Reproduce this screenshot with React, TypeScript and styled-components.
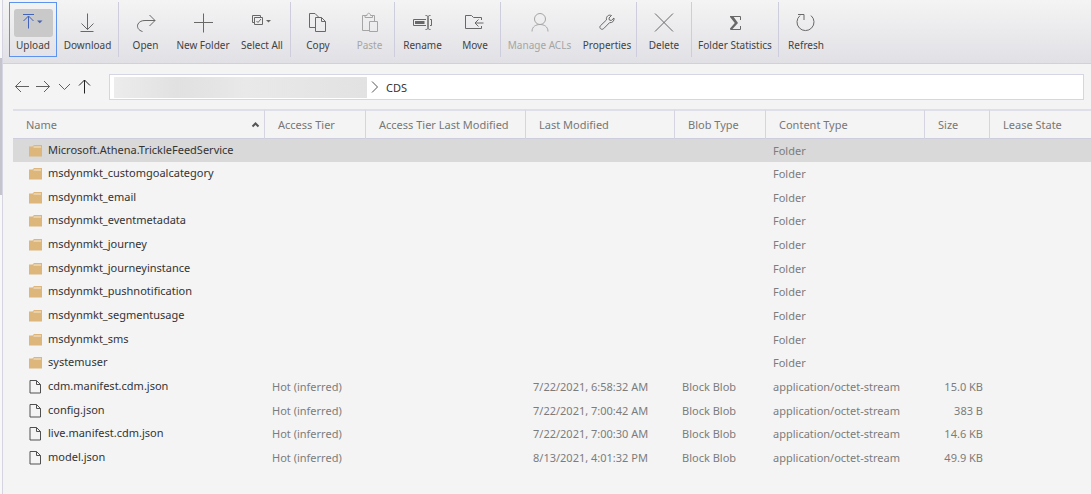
import React from "react";
import styled, { createGlobalStyle } from "styled-components";

const GlobalStyle = createGlobalStyle`
  * { box-sizing: border-box; }
  html, body { margin: 0; min-height: 100%; background: #f4f4f4; }
  body, button, input, table {
    font-family: "Noto Sans", "Open Sans", sans-serif;
    font-size: 11px;
  }
`;

const Page = styled.div`
  display: flex;
  min-height: 100vh;
`;

const SideEdge = styled.div`
  flex: none;
  width: 3px;
  background: #f8f8f8;
  border-right: 1px solid #d5d5e2;
  padding-top: 58px;
`;

const SideThumb = styled.div`
  height: 137px;
  background: #c4c4cc;
`;

const Main = styled.main`
  flex: 1;
  min-width: 0;
`;

const Toolbar = styled.div`
  display: flex;
  height: 64px;
  padding: 2px 0 6px 6px;
  background: linear-gradient(#f4f4f4, #e1e0e5);
  border-bottom: 1px solid #d0d0de;
`;

const Group = styled.div`
  display: flex;
  & + & { border-left: 1px solid #cdcddd; }
`;

const ToolButton = styled.button<{ $width: number }>`
  display: flex;
  flex-direction: column;
  align-items: center;
  width: ${(p) => p.$width}px;
  padding: 6px 0 0;
  border: 1px solid transparent;
  background: none;
  color: #424242;
  font-size: 10px;
  line-height: 16px;
  white-space: nowrap;
  &:disabled { color: #a5a5a5; }
  &[aria-pressed="true"] { border-color: #5b93ee; }
`;

const IconBox = styled.span<{ $active?: boolean; $disabled?: boolean }>`
  display: flex;
  align-items: center;
  justify-content: center;
  width: 39px;
  height: 28px;
  border-radius: 3px;
  background: ${(p) => (p.$active ? "#c9c9c9" : "none")};
  color: ${(p) => (p.$active ? "#4263b8" : p.$disabled ? "#a5a5a5" : "#686868")};
`;

const AddressBar = styled.div`
  display: flex;
  align-items: center;
  gap: 14px;
  padding: 10px 7px 9px 8px;
`;

const NavButtons = styled.nav`
  display: flex;
  padding-bottom: 2px;
`;

const NavButton = styled.button`
  display: flex;
  justify-content: center;
  width: 21px;
  padding: 0;
  border: 0;
  background: none;
  color: #606060;
  &:last-child { color: #222; }
`;

const PathBox = styled.div`
  flex: 1;
  display: flex;
  align-items: center;
  height: 26px;
  padding-left: 4px;
  background: #fff;
  border: 1px solid #d5d5e5;
`;

const HiddenCrumb = styled.span`
  width: 253px;
  height: 21px;
  margin-right: 4px;
  background: linear-gradient(90deg, #ececec, #e1e1e1 25%, #e4e4e4 38%, #e9e9e9 52%, #e2e2e2);
`;

const PathInput = styled.input`
  flex: 1;
  min-width: 0;
  margin-left: 7px;
  padding: 0;
  border: 0;
  outline: 0;
  background: none;
  color: #333;
`;

const TableArea = styled.div`
  padding-left: 10px;
`;

const Table = styled.table`
  width: 100%;
  table-layout: fixed;
  border-collapse: separate;
  border-spacing: 0;
  line-height: 16px;
`;

const HeadCell = styled.th<{ $width?: number }>`
  width: ${(p) => (p.$width ? `${p.$width}px` : "auto")};
  height: 30px;
  padding: 0 0 0 13px;
  border-top: 2px solid #dfdfe9;
  border-bottom: 1px solid #cdcddd;
  border-right: 1px solid #d5d5e2;
  color: #777;
  font-weight: 400;
  text-align: left;
  white-space: nowrap;
  &:last-child { border-right: 0; }
`;

const HeadLabel = styled.span`
  display: flex;
  align-items: center;
  justify-content: space-between;
  padding-right: 4px;
`;

const Row = styled.tr<{ $selected?: boolean }>`
  height: 24px;
  background: ${(p) => (p.$selected ? "#d9d9d9" : "none")};
  &:first-child, &:nth-child(3n) { height: 23px; }
`;

const Cell = styled.td<{ $right?: boolean }>`
  padding: 0 7px;
  color: #7c7c7c;
  text-align: ${(p) => (p.$right ? "right" : "left")};
  white-space: nowrap;
`;

const NameCell = styled(Cell)`
  padding: 0 0 2px 15px;
  color: #333;
`;

const NameContent = styled.span`
  display: flex;
  align-items: center;
  gap: 6px;
`;

type SvgProps = { w?: number; h?: number; sw?: number; children: React.ReactNode };
const Svg = ({ w = 24, h = 24, sw = 1, children }: SvgProps) => (
  <svg width={w} height={h} viewBox={`0 0 ${w} ${h}`} fill="none" stroke="currentColor" strokeWidth={sw} aria-hidden="true">
    {children}
  </svg>
);

const icons = {
  upload: (
    <Svg>
      <path d="M2 3.500h11M7.500 17.500V5M2.500 10l5-5 5 5" />
      <path d="M16 9.500h5.500l-2.750 2.800z" fill="currentColor" stroke="none" />
    </Svg>
  ),
  download: <Svg><path d="M11.500 2.500v16M5.500 12.500l6 6 6-6M4.500 20.500h13" /></Svg>,
  open: <Svg><path d="M8.500 20.500C4.500 19.500 2.500 16 4 13 5.300 10.500 8 9.500 11 9.500h10M15.500 4l5.500 5.500-5.500 5.500" /></Svg>,
  add: <Svg><path d="M12.500 2.500v19M3 11.500h19" /></Svg>,
  selectAll: (
    <Svg>
      <path d="M4.500 11.500h-2v-7h8v2M4.500 6.500h8v7h-8z" />
      <path d="M6.500 10l1.500 1.500 3-3.500" />
      <path d="M16 9h5l-2.500 2.500z" fill="currentColor" stroke="none" />
    </Svg>
  ),
  copy: <Svg><path d="M9 16.500H3.500v-14h5.500l3.500 3.500M9.500 6.500h6l4 4v10h-10zM15.500 6.500v4h4" /></Svg>,
  paste: <Svg><path d="M11 19.500H4.500v-15H7M14 4.500h2.500V10M7 6.500v-2h2c0-3 3.500-3 3.500 0h2v2zM11.500 10.500h8v10h-8z" /></Svg>,
  rename: (
    <Svg>
      <path d="M15 8.500H2.500v6H15M19 8.500h1.500v6H19M14.500 4.500c2 0 2.500.5 2.500 2v10c0 1.500-.5 2-2.500 2M19.500 4.500c-2 0-2.500.5-2.500 2v10c0 1.500.5 2 2.500 2" />
      <path d="M4 10h9.500v3H4z" fill="currentColor" stroke="none" />
    </Svg>
  ),
  move: <Svg><path d="M18.500 9V6.500h-8l-2-2h-6v13h16V15M20.500 12h-8.500M15.500 8.500L12 12l3.500 3.500" /></Svg>,
  person: <Svg><circle cx="12" cy="8" r="5.500" /><path d="M4 20.500c0-5 4-7 8-7s8 2 8 7" /></Svg>,
  wrench: <Svg><path d="M16.500 4.500l-2.500 2.500.3 2 2 .5 2.700-2.500c.5 2.800-1.500 5-4.500 4.700l-5.800 5.900c-2 1.900-5-.5-3.400-2.700l6.200-6c-.7-3 1.700-5.700 5-4.400z" /></Svg>,
  cross: <Svg><path d="M3 2.500l18 18M21 2.500l-18 18" /></Svg>,
  sigma: <Svg><path d="M17.500 9V5.500H7.500M7.500 18.500h10V15" /><path d="M7 5h3l5 7-6 6.500H7v-1l4.800-5.500L7 6z" fill="currentColor" stroke="none" /></Svg>,
  refresh: <Svg><path d="M6 4.600A8.500 8.500 0 1 0 17 4.600M4 3.500h6V9" /></Svg>,
};

type Tool = { label: string; icon: keyof typeof icons; width: number; active?: boolean; disabled?: boolean };

const toolGroups: Tool[][] = [
  [
    { label: "Upload", icon: "upload", width: 48, active: true },
    { label: "Download", icon: "download", width: 61 },
  ],
  [
    { label: "Open", icon: "open", width: 53 },
    { label: "New Folder", icon: "add", width: 62 },
    { label: "Select All", icon: "selectAll", width: 56 },
  ],
  [
    { label: "Copy", icon: "copy", width: 54 },
    { label: "Paste", icon: "paste", width: 49, disabled: true },
  ],
  [
    { label: "Rename", icon: "rename", width: 55 },
    { label: "Move", icon: "move", width: 50 },
  ],
  [
    { label: "Manage ACLs", icon: "person", width: 77, disabled: true },
    { label: "Properties", icon: "wrench", width: 58 },
  ],
  [{ label: "Delete", icon: "cross", width: 54 }],
  [{ label: "Folder Statistics", icon: "sigma", width: 86 }],
  [{ label: "Refresh", icon: "refresh", width: 54 }],
];

const columns = [
  { label: "Name", width: 252, sorted: true },
  { label: "Access Tier", width: 101 },
  { label: "Access Tier Last Modified", width: 160 },
  { label: "Last Modified", width: 149 },
  { label: "Blob Type", width: 91 },
  { label: "Content Type", width: 159 },
  { label: "Size", width: 65 },
  { label: "Lease State" },
];

const folders = [
  "Microsoft.Athena.TrickleFeedService",
  "msdynmkt_customgoalcategory",
  "msdynmkt_email",
  "msdynmkt_eventmetadata",
  "msdynmkt_journey",
  "msdynmkt_journeyinstance",
  "msdynmkt_pushnotification",
  "msdynmkt_segmentusage",
  "msdynmkt_sms",
  "systemuser",
];

const files = [
  { name: "cdm.manifest.cdm.json", modified: "7/22/2021, 6:58:32 AM", size: "15.0 KB" },
  { name: "config.json", modified: "7/22/2021, 7:00:42 AM", size: "383 B" },
  { name: "live.manifest.cdm.json", modified: "7/22/2021, 7:00:30 AM", size: "14.6 KB" },
  { name: "model.json", modified: "8/13/2021, 4:01:32 PM", size: "49.9 KB" },
];

const FolderIcon = () => (
  <svg width="14" height="14" viewBox="0 0 14 14" aria-hidden="true">
    <path d="M1 3.500h3.500L6 2h8v11.500H1z" fill="#dcb67a" />
    <path d="M5.500 4h7.500" stroke="#f6ead6" />
  </svg>
);

const FileIcon = () => (
  <Svg w={14} h={16}><path d="M2 2.500h6.500l4 4v8.500H2zM8.500 2.500v4h4" stroke="#505050" /></Svg>
);

export default function App() {
  return (
    <>
      <GlobalStyle />
      <Page>
        <SideEdge><SideThumb /></SideEdge>
        <Main>
          <Toolbar role="toolbar">
            {toolGroups.map((group) => (
              <Group key={group[0].label}>
                {group.map((t) => (
                  <ToolButton key={t.label} type="button" $width={t.width} disabled={t.disabled} aria-pressed={t.active}>
                    <IconBox $active={t.active} $disabled={t.disabled}>{icons[t.icon]}</IconBox>
                    {t.label}
                  </ToolButton>
                ))}
              </Group>
            ))}
          </Toolbar>
          <AddressBar>
            <NavButtons aria-label="History">
              <NavButton type="button" aria-label="Back"><Svg w={16} h={16}><path d="M15 8.500H1.500M7 3L1.500 8.500 7 14" /></Svg></NavButton>
              <NavButton type="button" aria-label="Forward"><Svg w={16} h={16}><path d="M1 8.500h13.500M9 3l5.500 5.500L9 14" /></Svg></NavButton>
              <NavButton type="button" aria-label="Recent"><Svg w={16} h={16}><path d="M3 6l5.500 5.500L14 6" /></Svg></NavButton>
              <NavButton type="button" aria-label="Up"><Svg w={16} h={16}><path d="M7.500 15.500V2M2 7.500L7.500 2 13 7.500" /></Svg></NavButton>
            </NavButtons>
            <PathBox>
              <HiddenCrumb />
              <Svg w={8} h={14}><path d="M1 1.500l5.500 5.500L1 12.500" stroke="#555" /></Svg>
              <PathInput aria-label="Path" defaultValue="CDS" />
            </PathBox>
          </AddressBar>
          <TableArea>
            <Table>
              <thead>
                <tr>
                  {columns.map((c) => (
                    <HeadCell key={c.label} $width={c.width} scope="col">
                      <HeadLabel>
                        {c.label}
                        {c.sorted && <Svg w={9} h={6} sw={2}><path d="M1.500 4.500l3-3 3 3" stroke="#555" /></Svg>}
                      </HeadLabel>
                    </HeadCell>
                  ))}
                </tr>
              </thead>
              <tbody>
                {folders.map((name, i) => (
                  <Row key={name} $selected={i === 0}>
                    <NameCell><NameContent><FolderIcon />{name}</NameContent></NameCell>
                    <Cell /><Cell /><Cell /><Cell />
                    <Cell>Folder</Cell>
                    <Cell /><Cell />
                  </Row>
                ))}
                {files.map((f) => (
                  <Row key={f.name}>
                    <NameCell><NameContent><FileIcon />{f.name}</NameContent></NameCell>
                    <Cell>Hot (inferred)</Cell>
                    <Cell />
                    <Cell>{f.modified}</Cell>
                    <Cell>Block Blob</Cell>
                    <Cell>application/octet-stream</Cell>
                    <Cell $right>{f.size}</Cell>
                    <Cell />
                  </Row>
                ))}
              </tbody>
            </Table>
          </TableArea>
        </Main>
      </Page>
    </>
  );
}
